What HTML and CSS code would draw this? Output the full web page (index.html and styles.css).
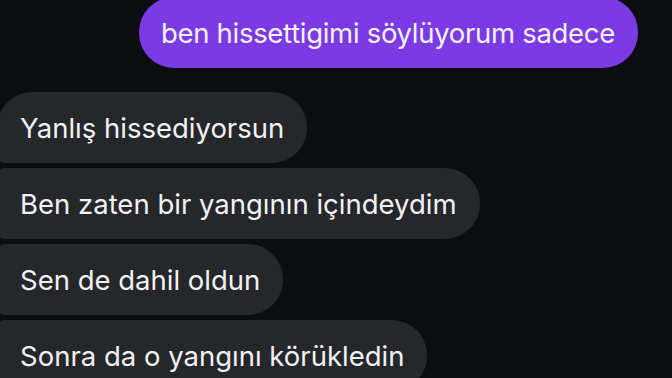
FILE: index.html
```html
<!DOCTYPE html>
<html lang="tr">
<head>
  <meta charset="UTF-8">
  <meta name="viewport" content="width=device-width, initial-scale=1.0">
  <link rel="stylesheet" href="styles.css">
</head>
<body>
  <div class="chat">
    <div class="bubble sent">ben hissettigimi söylüyorum sadece</div>

    <div class="group">
      <div class="bubble received first">Yanlış hissediyorsun</div>
      <div class="bubble received">Ben zaten bir yangının içindeydim</div>
      <div class="bubble received">Sen de dahil oldun</div>
      <div class="bubble received">Sonra da o yangını körükledin</div>
    </div>
  </div>
</body>
</html>
```

FILE: styles.css
```css
body {
  margin: 0;
  background-color: #0b0d11;
  font-family: 'Inter', 'Noto Sans', sans-serif;
  overflow: hidden;
}

.chat {
  display: flex;
  flex-direction: column;
  margin-top: -3px;
}

.bubble {
  height: 71px;
  display: flex;
  align-items: center;
  padding: 0 23px 0 22px;
  font-size: 27.5px;
  color: #f2f2f4;
  border-radius: 35px;
  white-space: nowrap;
}

.sent {
  align-self: flex-end;
  margin-right: 34px;
  letter-spacing: -0.3px;
  background-color: #7b3ae3;
}

.group {
  display: flex;
  flex-direction: column;
  align-items: flex-start;
  gap: 5px;
  margin-top: 24px;
}

.received {
  margin-left: -3px;
  padding-left: 23px;
  background-color: #26272b;
  border-radius: 8px 35px 35px 8px;
}

.received.first {
  border-top-left-radius: 35px;
}
```
